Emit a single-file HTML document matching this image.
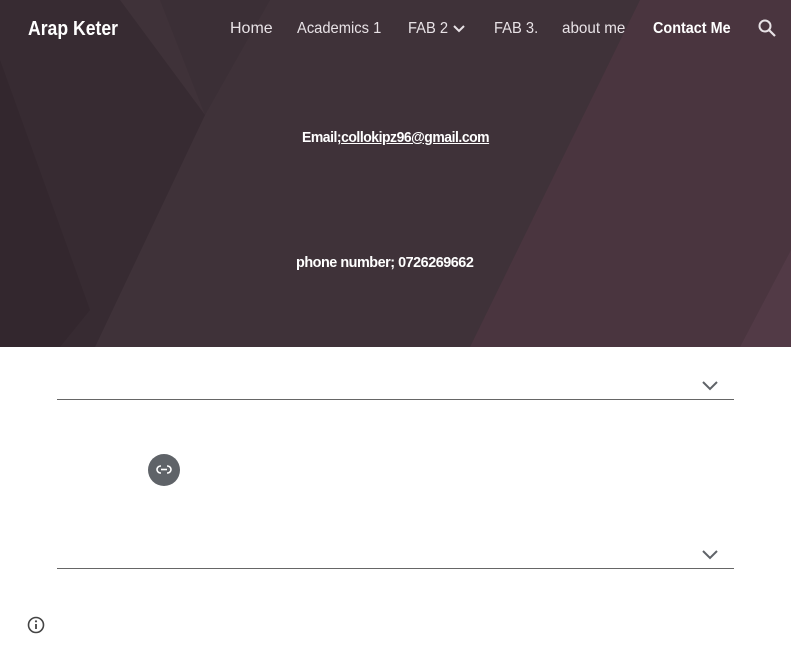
<!DOCTYPE html>
<html><head><meta charset="utf-8"><style>
body{margin:0;width:791px;height:659px;overflow:hidden;background:#fff;font-family:"Liberation Sans",sans-serif;position:relative}
.hero{position:absolute;left:0;top:0;width:791px;height:347px;background:#3f3239;overflow:hidden}
.hero svg{position:absolute;left:0;top:0}
.t{position:absolute;color:#fff;white-space:nowrap;transform-origin:0 0}
.nav{font-size:16px;top:20px;color:#e8e2e6}
.line{position:absolute;left:57px;width:677px;height:1px;background:#666}
</style></head><body>
<div class="hero">
<svg width="791" height="347">
<polygon points="0,0 120,0 205,115 95,347 0,347" fill="#372b32"/>
<polygon points="0,60 90,310 60,347 0,347" fill="#33272e"/>
<polygon points="205,115 270,0 160,0" fill="#3b2f36"/>
<polygon points="640,0 791,0 791,347 470,347" fill="#4a353f"/>
<polygon points="791,250 740,347 791,347" fill="#523a46"/>
</svg>
<div class="t" style="left:28px;top:18px;font-size:20px;font-weight:bold;transform:scaleX(0.88)">Arap Keter</div>
<div class="t nav" style="left:230px">Home</div>
<div class="t nav" style="left:297px;transform:scaleX(0.92)">Academics 1</div>
<div class="t nav" style="left:408px;transform:scaleX(0.92)">FAB 2</div>
<svg style="position:absolute;left:452px;top:23px" width="14" height="12"><path d="M2 3l5 5 5-5" stroke="#e8e2e6" stroke-width="2" fill="none"/></svg>
<div class="t nav" style="left:494px;transform:scaleX(0.92)">FAB 3.</div>
<div class="t nav" style="left:562px;transform:scaleX(0.95)">about me</div>
<div class="t nav" style="left:653px;font-weight:bold;color:#fff;transform:scaleX(0.9)">Contact Me</div>
<svg style="position:absolute;left:757px;top:18px" width="20" height="20"><circle cx="8" cy="8" r="5.5" stroke="#e8e2e6" stroke-width="2" fill="none"/><path d="M12 12l6 6" stroke="#e8e2e6" stroke-width="2.2"/></svg>
<div class="t" style="left:302px;top:129px;font-size:15px;font-weight:bold;letter-spacing:-0.5px;transform:scaleX(0.93)">Email;<u>collokipz96@gmail.com</u></div>
<div class="t" style="left:296px;top:254px;font-size:15px;font-weight:bold;letter-spacing:-0.5px;transform:scaleX(0.96)">phone number; 0726269662</div>
</div>
<svg style="position:absolute;left:701px;top:380px" width="18" height="12"><path d="M2 2l7 7 7-7" stroke="#5f6368" stroke-width="2" fill="none"/></svg>
<div class="line" style="top:399px"></div>
<div style="position:absolute;left:148px;top:454px;width:32px;height:32px;border-radius:50%;background:#5f6368"></div>
<svg style="position:absolute;left:156px;top:464px" width="16" height="12"><rect x="1" y="2" width="14" height="7" rx="3.5" stroke="#fff" stroke-width="1.6" fill="none"/><rect x="5" y="0" width="6" height="12" fill="#5f6368"/><path d="M5 5.5h6" stroke="#fff" stroke-width="1.6"/></svg>
<svg style="position:absolute;left:701px;top:549px" width="18" height="12"><path d="M2 2l7 7 7-7" stroke="#5f6368" stroke-width="2" fill="none"/></svg>
<div class="line" style="top:568px"></div>
<svg style="position:absolute;left:27px;top:616px" width="18" height="18"><circle cx="9" cy="9" r="7.5" stroke="#444" stroke-width="1.6" fill="none"/><path d="M9 8v5" stroke="#444" stroke-width="1.8"/><circle cx="9" cy="5.3" r="1.1" fill="#444"/></svg>
</body></html>
